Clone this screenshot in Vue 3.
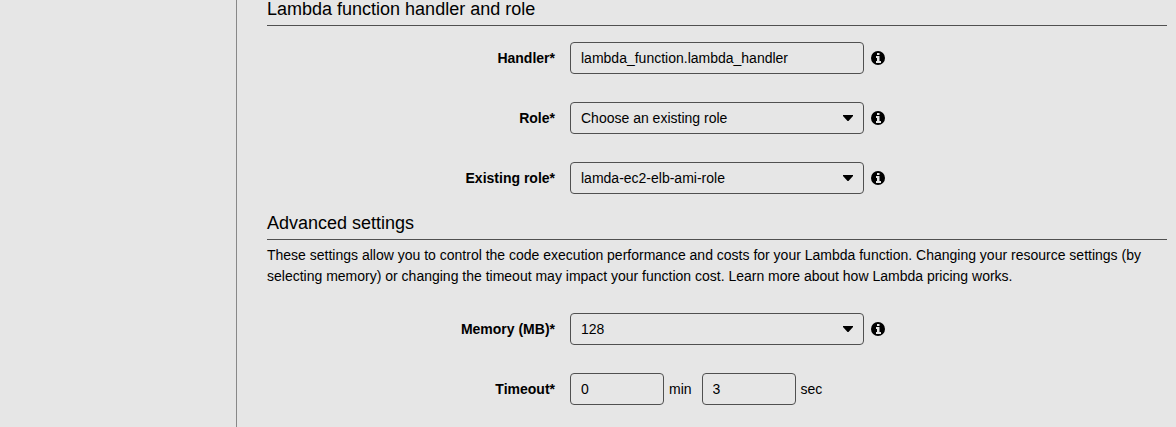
<script setup>
import { ref } from 'vue'
const handler = ref('lambda_function.lambda_handler')
const minutes = ref('0')
const seconds = ref('3')
const glyph = 'M6 2h2.500v2H6zM5 5h3.500v5H10v2H5v-2h1V7H5z'
</script>

<template>
  <div class="page">
    <aside class="side"></aside>
    <main class="content">
      <h2>Lambda function handler and role</h2>
      <div class="fields">
        <div class="row">
          <label for="handler">Handler*</label>
          <input id="handler" v-model="handler" class="control" type="text" />
          <svg class="info" viewBox="0 0 14 14" aria-hidden="true"><circle cx="7" cy="7" r="7" /><path :d="glyph" /></svg>
        </div>
        <div class="row">
          <label for="role">Role*</label>
          <div class="select">
            <select id="role" class="control"><option>Choose an existing role</option></select>
            <svg class="caret" viewBox="0 0 12 6" aria-hidden="true"><path d="M1 0h10v1L6.500 6h-1L1 1z" /></svg>
          </div>
          <svg class="info" viewBox="0 0 14 14" aria-hidden="true"><circle cx="7" cy="7" r="7" /><path :d="glyph" /></svg>
        </div>
        <div class="row">
          <label for="existing">Existing role*</label>
          <div class="select">
            <select id="existing" class="control"><option>lamda-ec2-elb-ami-role</option></select>
            <svg class="caret" viewBox="0 0 12 6" aria-hidden="true"><path d="M1 0h10v1L6.500 6h-1L1 1z" /></svg>
          </div>
          <svg class="info" viewBox="0 0 14 14" aria-hidden="true"><circle cx="7" cy="7" r="7" /><path :d="glyph" /></svg>
        </div>
      </div>
      <h2 class="advanced">Advanced settings</h2>
      <p>These settings allow you to control the code execution performance and costs for your Lambda function. Changing your resource settings (by selecting memory) or changing the timeout may impact your function cost. Learn more about how Lambda pricing works.</p>
      <div class="fields lower">
        <div class="row">
          <label for="memory">Memory (MB)*</label>
          <div class="select">
            <select id="memory" class="control"><option>128</option></select>
            <svg class="caret" viewBox="0 0 12 6" aria-hidden="true"><path d="M1 0h10v1L6.500 6h-1L1 1z" /></svg>
          </div>
          <svg class="info" viewBox="0 0 14 14" aria-hidden="true"><circle cx="7" cy="7" r="7" /><path :d="glyph" /></svg>
        </div>
        <div class="row">
          <label for="minutes">Timeout*</label>
          <input id="minutes" v-model="minutes" class="control short" type="text" />
          <span class="unit">min</span>
          <input id="seconds" v-model="seconds" class="control short second" type="text" aria-label="Timeout seconds" />
          <span class="unit">sec</span>
        </div>
      </div>
    </main>
  </div>
</template>

<style>
body {
  background: #e6e6e6;
}
</style>

<style scoped>
.page {
  display: flex;
  min-height: 100vh;
  font: 14px/21px "Liberation Sans", Arial, sans-serif;
  color: #000;
}
.side {
  flex: 0 0 236px;
  border-right: 1px solid #888;
}
.content {
  flex: 1;
  min-width: 0;
  padding: 0 9px 0 30px;
}
h2 {
  margin: 0;
  padding-bottom: 7px;
  border-bottom: 1px solid #505050;
  font-size: 18px;
  line-height: 18px;
  font-weight: 400;
}
.advanced {
  margin-top: 20px;
}
p {
  margin: 5px 0 0;
}
.fields {
  display: flex;
  flex-direction: column;
  gap: 28px;
  padding-top: 16px;
}
.lower {
  padding: 26px 0 21px;
}
.row {
  display: flex;
  align-items: center;
}
.row > label {
  width: 288px;
  margin-right: 15px;
  text-align: right;
  font-weight: 700;
}
.control {
  display: block;
  box-sizing: border-box;
  width: 294px;
  height: 32px;
  margin: 0;
  padding: 0 10px;
  border: 1px solid #505050;
  border-radius: 4px;
  background: transparent;
  color: inherit;
  font: inherit;
  appearance: none;
}
.short {
  width: 94px;
}
.second {
  margin-left: 10px;
}
.select {
  position: relative;
}
.caret {
  position: absolute;
  top: 13px;
  right: 10px;
  width: 12px;
  height: 6px;
  pointer-events: none;
}
.info {
  width: 14px;
  height: 14px;
  margin-left: 7px;
}
.info path {
  fill: #e6e6e6;
}
.unit {
  margin-left: 5px;
}
</style>
